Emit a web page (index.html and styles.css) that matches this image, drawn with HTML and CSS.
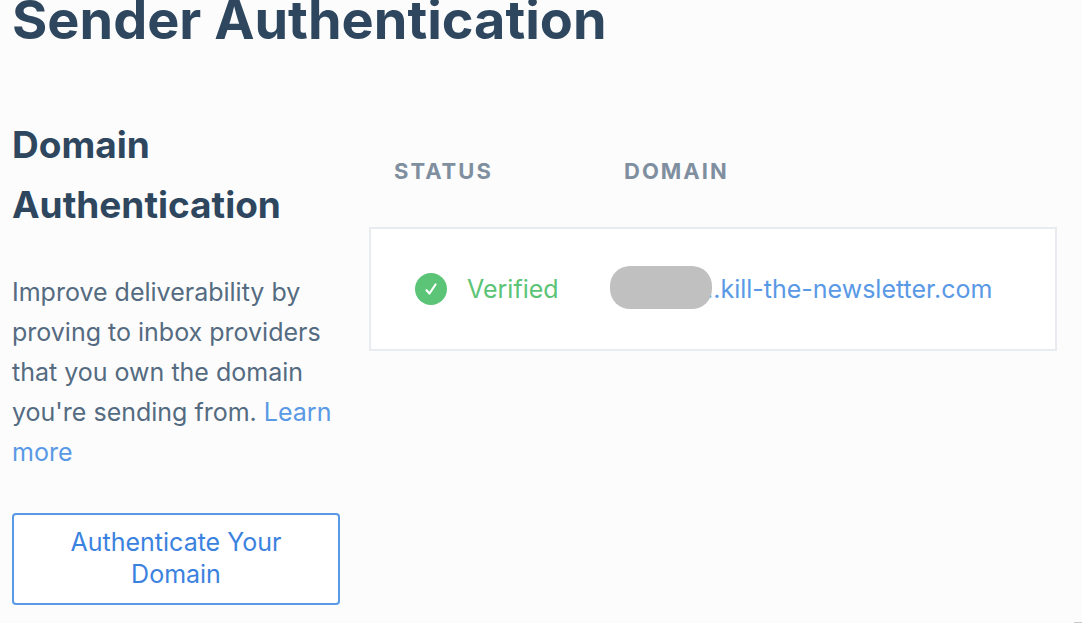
FILE: index.html
```html
<!DOCTYPE html>
<html lang="en">
<head>
<meta charset="utf-8">
<title>Sender Authentication</title>
<link rel="stylesheet" href="styles.css">
</head>
<body>
<main class="page">
  <h1 class="page-title">Sender Authentication</h1>
  <div class="columns">
    <section class="intro">
      <h2 class="intro-title">Domain Authentication</h2>
      <p class="intro-text">Improve deliverability by<br>proving to inbox providers<br>that you own the domain<br>you're sending from. <a href="#">Learn<br>more</a></p>
      <button class="action" type="button">Authenticate Your<br>Domain</button>
    </section>
    <table class="domains">
      <thead>
        <tr><th class="status-col" scope="col">STATUS</th><th scope="col">DOMAIN</th></tr>
      </thead>
      <tbody>
        <tr>
          <td class="status-cell"><span class="status"><svg class="check" viewBox="0 0 32 32" aria-hidden="true"><circle cx="16" cy="16" r="16" fill="#5bc476"/><path d="M11.500 17.200l3 3.300 6-9" fill="none" stroke="#fff" stroke-width="2.200" stroke-linecap="round" stroke-linejoin="round"/></svg>Verified</span></td>
          <td><a class="domain" href="#"><span class="redacted"></span>..kill-the-newsletter.com</a></td>
        </tr>
      </tbody>
    </table>
  </div>
</main>
</body>
</html>
```
FILE: styles.css
```css
* { box-sizing: border-box; }
body {
  margin: 0;
  background: #fcfcfc;
  color: #546b81;
  font-family: Inter, "Liberation Sans", sans-serif;
  font-size: 25px;
  line-height: 40px;
}
a { color: #5999e5; text-decoration: none; }
.page { position: relative; padding: 0 25px 18px 12px; }
.page::after {
  content: "";
  position: absolute;
  right: 0;
  bottom: 0;
  width: 8px;
  height: 1px;
  background: #c8c8c8;
}
.page-title {
  margin: 0;
  color: #2e475f;
  font-size: 54px;
  line-height: 40px;
  font-weight: 700;
  white-space: nowrap;
}
.columns {
  display: grid;
  grid-template-columns: 328px minmax(0, 1fr);
  gap: 29px;
  align-items: start;
  padding-top: 75px;
}
.intro-title {
  margin: 0 0 37px;
  color: #2e475f;
  font-size: 37px;
  line-height: 60px;
  font-weight: 700;
}
.intro-text { margin: 0 0 41px; white-space: nowrap; }
.action {
  width: 100%;
  padding: 11px 16px 13px;
  border: 2px solid #5999e5;
  border-radius: 4px;
  background: #fff;
  color: #3b82df;
  font: inherit;
  line-height: 32px;
}
.domains { width: 100%; border-collapse: collapse; }
.domains th {
  height: 113px;
  padding: 0 0 1px 14px;
  color: #7f8fa0;
  font-size: 22px;
  line-height: 32px;
  font-weight: 700;
  letter-spacing: 2px;
  text-align: left;
}
.domains .status-col { width: 240px; padding-left: 24px; }
.domains tbody tr { border: 2px solid #e8ecf0; background: #fff; }
.domains td { height: 122px; padding: 0; }
.domains .status-cell { padding-left: 44px; }
.status { display: flex; align-items: center; gap: 20px; color: #5bc476; }
.check { width: 32px; height: 32px; }
.domain { display: flex; align-items: center; }
.redacted {
  z-index: 1;
  width: 102px;
  height: 43px;
  margin: 0 -6px 3px 0;
  border-radius: 20px;
  background: #c0c0c0;
}
```
